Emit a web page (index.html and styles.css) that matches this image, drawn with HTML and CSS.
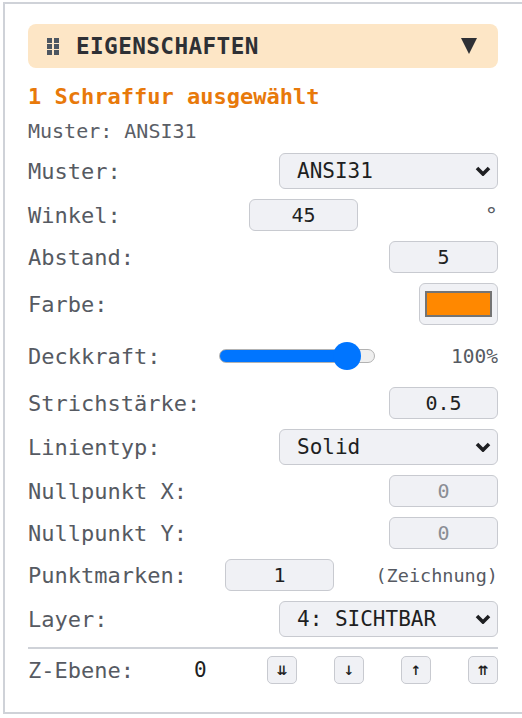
FILE: index.html
```
<!DOCTYPE html>
<html lang="de">
<head>
    <meta charset="UTF-8">
    <meta name="viewport" content="width=device-width, initial-scale=1.0">
    <title>Eigenschaften</title>
    <link rel="stylesheet" href="styles.css">
</head>
<body>
    <div class="panel">
        <div class="panel-header">
            <svg class="grip" width="12" height="17" viewBox="0 0 12 17">
                <rect x="0" y="0" width="5" height="5"/><rect x="7" y="0" width="5" height="5"/>
                <rect x="0" y="6" width="5" height="5"/><rect x="7" y="6" width="5" height="5"/>
                <rect x="0" y="12" width="5" height="5"/><rect x="7" y="12" width="5" height="5"/>
            </svg>
            <span class="panel-title">EIGENSCHAFTEN</span>
            <svg class="toggle" width="16" height="16" viewBox="0 0 16 16"><polygon points="0,0 16,0 8,16"/></svg>
        </div>

        <div class="selection">1 Schraffur ausgewählt</div>
        <div class="info">Muster: ANSI31</div>

        <div class="props">
            <div class="row">
                <label>Muster:</label>
                <div class="select"><span>ANSI31</span><svg width="16" height="10" viewBox="0 0 16 10"><polyline points="2,2 8,8 14,2"/></svg></div>
            </div>
            <div class="row">
                <label>Winkel:</label>
                <input type="text" class="num" value="45">
                <span class="unit unit-deg">°</span>
            </div>
            <div class="row">
                <label>Abstand:</label>
                <input type="text" class="num" value="5">
            </div>
            <div class="row row-color">
                <label>Farbe:</label>
                <div class="color-btn"><div class="swatch"></div></div>
            </div>
            <div class="row row-slider">
                <label>Deckkraft:</label>
                <input type="range" class="range" min="0" max="112" value="100">
                <span class="unit unit-pct">100%</span>
            </div>
            <div class="row">
                <label>Strichstärke:</label>
                <input type="text" class="num" value="0.5">
            </div>
            <div class="row">
                <label>Linientyp:</label>
                <div class="select"><span>Solid</span><svg width="16" height="10" viewBox="0 0 16 10"><polyline points="2,2 8,8 14,2"/></svg></div>
            </div>
            <div class="row">
                <label>Nullpunkt X:</label>
                <input type="text" class="num" value="0" disabled>
            </div>
            <div class="row">
                <label>Nullpunkt Y:</label>
                <input type="text" class="num" value="0" disabled>
            </div>
            <div class="row">
                <label>Punktmarken:</label>
                <input type="text" class="num" value="1">
                <span class="unit unit-note">(Zeichnung)</span>
            </div>
            <div class="row">
                <label>Layer:</label>
                <div class="select"><span>4: SICHTBAR</span><svg width="16" height="10" viewBox="0 0 16 10"><polyline points="2,2 8,8 14,2"/></svg></div>
            </div>
        </div>

        <div class="z-row">
            <label class="z-label">Z-Ebene:</label>
            <span class="z-value">0</span>
            <div class="z-buttons">
                <button class="z-btn">⇊</button>
                <button class="z-btn">↓</button>
                <button class="z-btn">↑</button>
                <button class="z-btn">⇈</button>
            </div>
        </div>
    </div>
</body>
</html>
```

FILE: styles.css
```
body {
    margin: 0;
    background-color: #fff;
    font-family: 'DejaVu Sans Mono', monospace;
    overflow: hidden;
}

.panel {
    box-sizing: border-box;
    margin: 2px 0 0 3px;
    width: 519px;
    height: 712px;
    padding: 20px 24px 0 23px;
    border-top: 2px solid #cfd2d8;
    border-left: 2px solid #cfd2d8;
    border-bottom: 2px solid #cfd2d8;
}

.panel-header {
    display: flex;
    align-items: center;
    height: 44px;
    padding: 0 21px 0 19px;
    background-color: #fde6c6;
    border-radius: 8px;
}

.grip {
    fill: #4d5661;
}

.panel-title {
    margin-left: 17px;
    flex: 1;
    font-size: 22.7px;
    font-weight: bold;
    letter-spacing: 0.4px;
    color: #2e3035;
}

.toggle {
    fill: #2e3035;
}

.selection {
    margin-top: 15px;
    font-size: 22px;
    line-height: 28px;
    font-weight: bold;
    color: #e8790a;
}

.info {
    margin-top: 8px;
    font-size: 20px;
    line-height: 24px;
    color: #5a5e66;
}

.props {
    display: flex;
    flex-direction: column;
    gap: 10px;
    margin-top: 10px;
}

.row {
    display: flex;
    align-items: center;
}

.row label, .z-label {
    flex: 1;
    font-size: 22px;
    color: #565a62;
}

.select {
    display: flex;
    align-items: center;
    justify-content: space-between;
    box-sizing: border-box;
    width: 219px;
    height: 36px;
    padding: 0 6px 0 17px;
    background-color: #f0f1f5;
    border: 1.5px solid #c8cad0;
    border-radius: 6px;
    font-size: 21px;
    color: #1e1f22;
}

.select polyline {
    fill: none;
    stroke: #1e1f22;
    stroke-width: 3.6;
}

.num {
    box-sizing: border-box;
    width: 109px;
    height: 32px;
    padding: 0;
    background-color: #f0f1f5;
    border: 1.5px solid #c8cad0;
    border-radius: 6px;
    font-family: 'DejaVu Sans Mono', monospace;
    font-size: 20px;
    color: #1e1f22;
    text-align: center;
}

.num:disabled {
    color: #8a8d94;
}

.unit {
    text-align: right;
    color: #565a62;
}

.unit-deg {
    width: 140px;
    font-size: 22px;
}

.unit-pct {
    width: 123px;
    font-size: 19.5px;
}

.unit-note {
    width: 164px;
    font-size: 18.5px;
}

.color-btn {
    box-sizing: border-box;
    width: 79px;
    height: 42px;
    padding: 7px 5px;
    background-color: #f0f1f5;
    border: 1.5px solid #c8cad0;
    border-radius: 6px;
}

.swatch {
    height: 100%;
    box-sizing: border-box;
    background-color: #ff8800;
    border: 2.5px solid #747474;
}

.row-slider {
    height: 42px;
}

.range {
    -webkit-appearance: none;
    appearance: none;
    margin: 0;
    width: 156px;
    height: 14px;
    border-radius: 7px;
    border: 1px solid #b2b2b2;
    box-sizing: border-box;
    background: linear-gradient(to right, #0075ff 0, #0075ff 82%, #efefef 82%);
}

.range::-webkit-slider-thumb {
    -webkit-appearance: none;
    width: 28px;
    height: 28px;
    border-radius: 50%;
    background-color: #0075ff;
    border: none;
}

.z-row {
    display: flex;
    align-items: center;
    margin-top: 10px;
    padding-top: 7px;
    border-top: 2px solid #cfd2d8;
}

.z-label {
    flex: 0 0 166px;
}

.z-value {
    font-size: 21px;
    color: #1e1f22;
}

.z-buttons {
    display: flex;
    justify-content: space-between;
    width: 231px;
    margin-left: auto;
}

.z-btn {
    width: 30px;
    height: 28px;
    padding: 0;
    background-color: #f0f1f5;
    border: 1.5px solid #c8cad0;
    border-radius: 5px;
    font-family: 'DejaVu Sans', sans-serif;
    font-size: 13px;
    font-weight: bold;
    color: #1e1f22;
}
```
